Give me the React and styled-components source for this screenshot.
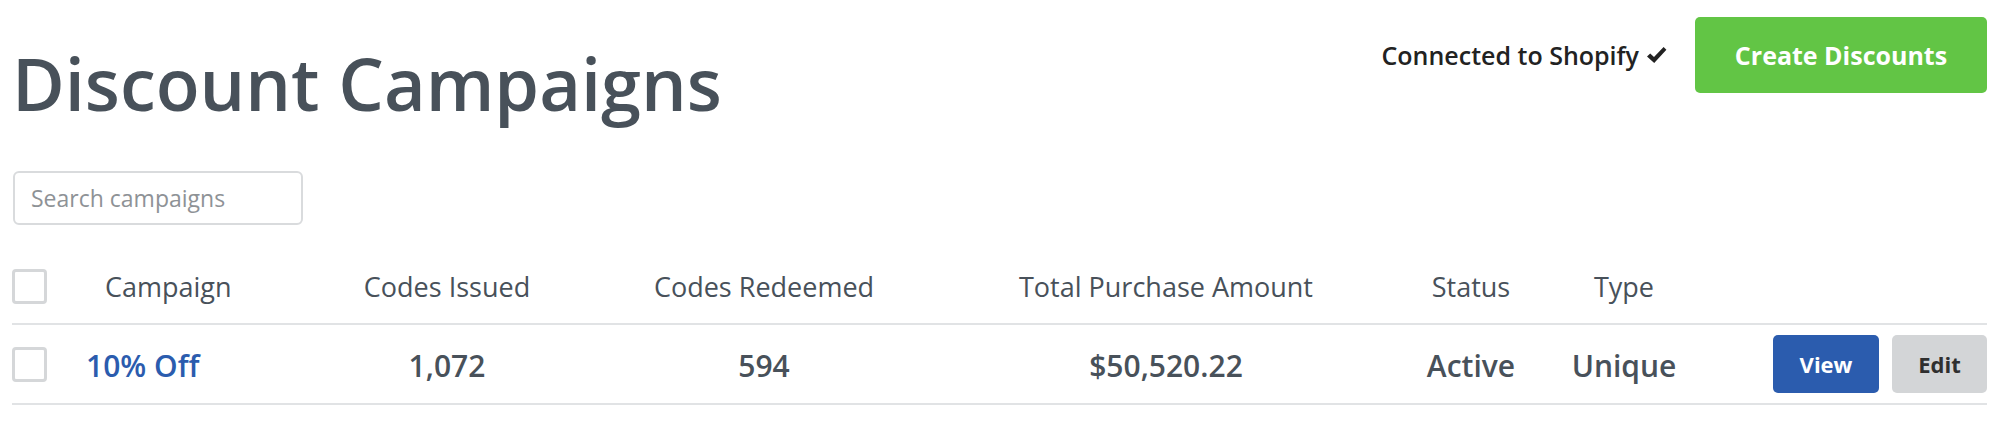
import React from 'react';
import styled, { createGlobalStyle } from 'styled-components';

const GlobalStyle = createGlobalStyle`
	html, body {
		margin: 0;
		padding: 0;
		background: #ffffff;
		font-family: "Open Sans", "Liberation Sans", sans-serif;
	}
`;

const campaigns = [
	{
		id: 1,
		name: '10% Off',
		issued: '1,072',
		redeemed: '594',
		total: '$50,520.22',
		status: 'Active',
		type: 'Unique',
	},
];

const columns = [
	{ key: 'name', label: 'Campaign', align: 'left' },
	{ key: 'issued', label: 'Codes Issued' },
	{ key: 'redeemed', label: 'Codes Redeemed' },
	{ key: 'total', label: 'Total Purchase Amount' },
	{ key: 'status', label: 'Status' },
	{ key: 'type', label: 'Type' },
];

// heavy check mark next to the connection label
const CheckIcon = () => (
	<svg width={21} height={18} viewBox={'0 0 21 18'}>
		<path
			d={'M1 10.5 L4.2 7.4 L8 11 L17.6 1 L20.4 3.8 L8.2 17 Z'}
			fill={'#222222'}
			strokeLinejoin={'round'}
		/>
	</svg>
);

const App = () => (
	<Page>
		<GlobalStyle />
		<TopBar>
			<Title>Discount Campaigns</Title>
			<TopActions>
				<Connected>
					Connected to Shopify <CheckIcon />
				</Connected>
				<Button variant={'green'} size={'large'}>Create Discounts</Button>
			</TopActions>
		</TopBar>
		<Search placeholder={'Search campaigns'} />
		<Table>
			<Row header>
				<Cell>
					<Checkbox />
				</Cell>
				{columns.map((col) => (
					<HeadCell key={col.key} align={col.align}>
						{col.label}
					</HeadCell>
				))}
				<Cell />
			</Row>
			{campaigns.map((item) => (
				<Row key={item.id}>
					<Cell>
						<Checkbox />
					</Cell>
					<BodyCell align={'left'}>
						<CampaignLink href={'#'}>{item.name}</CampaignLink>
					</BodyCell>
					<BodyCell>{item.issued}</BodyCell>
					<BodyCell>{item.redeemed}</BodyCell>
					<BodyCell>{item.total}</BodyCell>
					<BodyCell>{item.status}</BodyCell>
					<BodyCell>{item.type}</BodyCell>
					<ActionCell>
						<Button variant={'blue'}>View</Button>
						<Button variant={'gray'}>Edit</Button>
					</ActionCell>
				</Row>
			))}
		</Table>
	</Page>
);

const Page = styled.div`
	padding: 17px 12px 0 12px;
	color: #48515a;
`;

const TopBar = styled.div`
	display: flex;
	justify-content: space-between;
	align-items: flex-start;
`;

const Title = styled.h1`
	margin: 30px 0 0 0;
	font-size: 72px;
	font-weight: 600;
	line-height: 1;
	color: #48515a;
`;

const TopActions = styled.div`
	display: flex;
	align-items: center;
	gap: 28px;
`;

const Connected = styled.div`
	display: flex;
	align-items: center;
	gap: 7px;
	font-size: 25px;
	font-weight: 600;
	color: #222222;
`;

const buttonColors = {
	green: { bg: '#62c545', fg: '#ffffff' },
	blue: { bg: '#2b5cae', fg: '#ffffff' },
	gray: { bg: '#d3d5d7', fg: '#2f2f2f' },
};

const Button = styled.button`
	display: flex;
	align-items: center;
	justify-content: center;
	border: none;
	border-radius: 5px;
	cursor: pointer;
	font-family: "Open Sans", "Liberation Sans", sans-serif;
	font-weight: 700;
	background: ${props => buttonColors[props.variant].bg};
	color: ${props => buttonColors[props.variant].fg};
	height: ${props => props.size === 'large' ? '76px' : '58px'};
	padding: 0;
	min-width: ${props => props.size === 'large' ? '292px' : '95px'};
	font-size: ${props => props.size === 'large' ? '25px' : '22px'};

	&:first-child {
		min-width: ${props => props.size === 'large' ? '292px' : '106px'};
	}
`;

const Search = styled.input`
	display: block;
	box-sizing: border-box;
	width: 290px;
	height: 54px;
	margin: 52px 0 0 1px;
	padding: 0 16px;
	border: 2px solid #d9dbdd;
	border-radius: 6px;
	font-family: "Open Sans", "Liberation Sans", sans-serif;
	font-size: 23px;
	color: #48515a;
	outline: none;

	&::placeholder {
		color: #8e9296;
	}
`;

const Table = styled.div`
	margin-top: 24px;
`;

const Row = styled.div`
	display: grid;
	grid-template-columns: 74px 214px 294px 340px 464px 146px 160px 1fr;
	align-items: center;
	height: ${props => props.header ? '74px' : '78px'};
	border-bottom: 2px solid #e1e3e5;
`;

const Cell = styled.div`
	display: flex;
	align-items: center;
`;

const HeadCell = styled.div`
	font-size: 27px;
	font-weight: 400;
	color: #48515a;
	text-align: ${props => props.align || 'center'};
	padding-left: ${props => props.align === 'left' ? '19px' : '0'};
	margin-top: 1px;
`;

const BodyCell = styled.div`
	font-size: 30px;
	font-weight: 600;
	color: #48515a;
	text-align: ${props => props.align || 'center'};
	margin-top: 3px;
`;

const ActionCell = styled.div`
	display: flex;
	justify-content: flex-end;
	gap: 13px;
`;

const CampaignLink = styled.a`
	color: #2b5cae;
	text-decoration: none;
`;

const Checkbox = styled.span`
	display: block;
	box-sizing: border-box;
	width: 35px;
	height: 35px;
	border: 3px solid #d5d7d9;
	border-radius: 4px;
	background: #ffffff;
`;

export default App;
